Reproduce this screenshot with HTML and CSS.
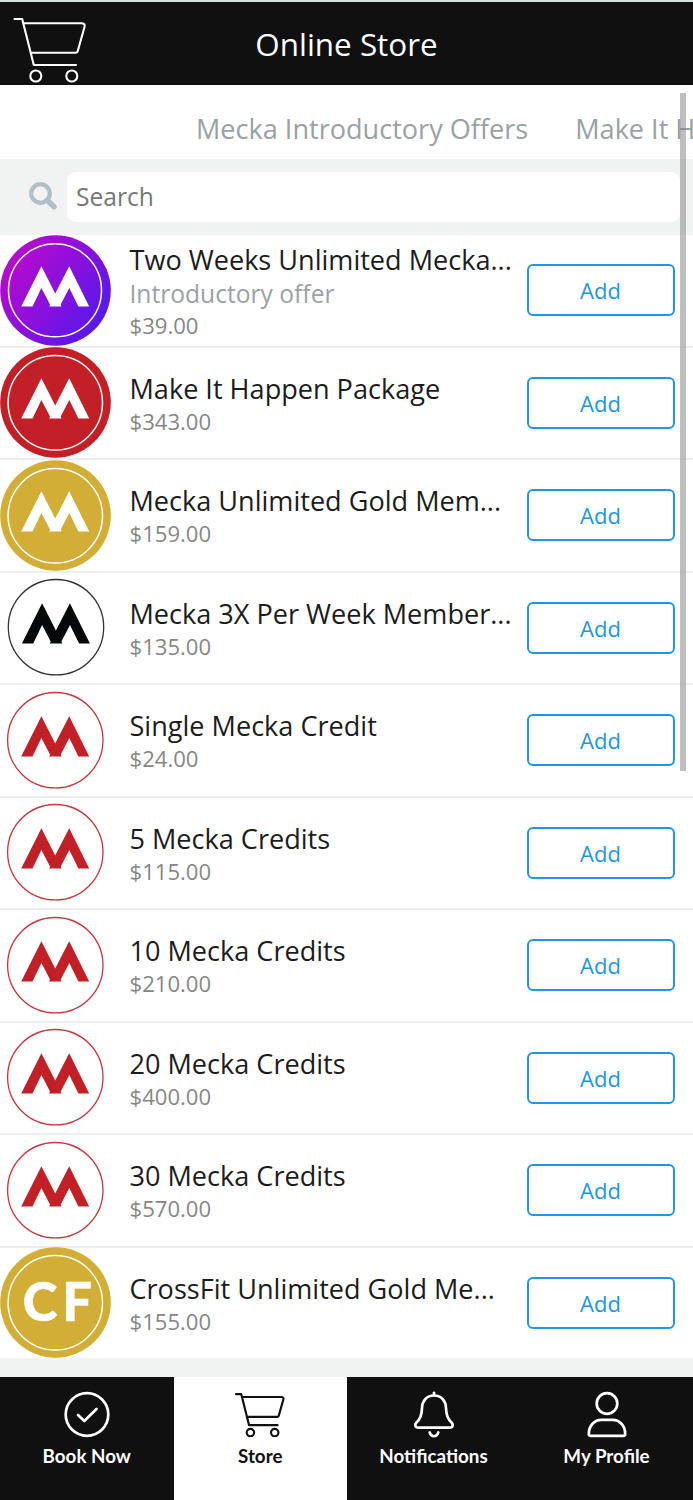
FILE: index.html
```html
<!DOCTYPE html>
<html lang="en">
<head>
<meta charset="utf-8">
<title>Online Store</title>
<link rel="stylesheet" href="styles.css">
</head>
<body>
<svg class="defs" width="0" height="0" aria-hidden="true">
  <defs>
    <linearGradient id="violet" x1="0.08" y1="0.2" x2="0.92" y2="0.8">
      <stop offset="0" stop-color="#b80ace"/><stop offset="0.5" stop-color="#8a10dc"/><stop offset="1" stop-color="#5518ee"/>
    </linearGradient>
    <path id="mark" d="M21.200 71.600L41.400 31.200L55.200 58.600L69.200 31.200L89.200 71.600H78.400L69.300 53L60.700 69.400L61.500 71.600H49.200L50 69.400L41.400 53L32.500 71.600Z"/>
    <symbol id="cart" viewBox="0 0 74 66">
      <g fill="none" stroke="currentColor" stroke-linecap="round" stroke-linejoin="round">
        <path d="M1.500 2H9.200L20.800 48H63M10.500 6.300H68.500Q72.500 6.300 71.500 10L64.700 34.300Q64.200 35.700 62.500 35.700H18"/>
        <circle cx="22.800" cy="59" r="5.500"/><circle cx="58.800" cy="59" r="5.500"/>
      </g>
    </symbol>
  </defs>
</svg>
<div class="app">
  <header class="header">
    <svg class="header-cart" viewBox="0 0 74 66"><use href="#cart"/></svg>
    <h1 class="header-title">Online Store</h1>
  </header>
  <nav class="tabs"><span class="tab tab-intro">Mecka Introductory Offers</span><span class="tab">Make It Happen</span></nav>
  <div class="search">
    <svg class="search-icon" viewBox="0 0 28 28"><circle cx="11.500" cy="11.500" r="9.300" fill="none" stroke="currentColor" stroke-width="4.200"/><path d="M18.500 18.500L25 24.800" stroke="currentColor" stroke-width="5.600" stroke-linecap="round"/></svg>
    <input class="search-input" type="text" placeholder="Search">
  </div>
  <main class="list">
    <article class="item"><svg class="logo violet" viewBox="0 0 111 111"><circle cx="55.500" cy="55.500" r="55.300"/><circle class="ring" cx="55" cy="55.300" r="46.500"/><use href="#mark"/></svg><div class="info"><h2 class="name">Two Weeks Unlimited Mecka...</h2><p class="note">Introductory offer</p><p class="price">$39.00</p></div><button class="add">Add</button></article>
    <article class="item"><svg class="logo red" viewBox="0 0 111 111"><circle cx="55.500" cy="55.500" r="55.300"/><circle class="ring" cx="55.300" cy="55.800" r="47.200"/><use href="#mark"/></svg><div class="info"><h2 class="name">Make It Happen Package</h2><p class="price">$343.00</p></div><button class="add">Add</button></article>
    <article class="item"><svg class="logo gold" viewBox="0 0 111 111"><circle cx="55.500" cy="55.500" r="55.300"/><circle class="ring" cx="55.300" cy="55.800" r="47.200"/><use href="#mark"/></svg><div class="info"><h2 class="name">Mecka Unlimited Gold Mem...</h2><p class="price">$159.00</p></div><button class="add">Add</button></article>
    <article class="item"><svg class="logo outline-black" viewBox="0 0 111 111"><circle cx="56" cy="55.200" r="47.700"/><use href="#mark" x="0.700" y="0"/></svg><div class="info"><h2 class="name">Mecka 3X Per Week Member...</h2><p class="price">$135.00</p></div><button class="add">Add</button></article>
    <article class="item"><svg class="logo outline-red" viewBox="0 0 111 111"><circle cx="55.300" cy="55.200" r="47.700"/><use href="#mark"/></svg><div class="info"><h2 class="name">Single Mecka Credit</h2><p class="price">$24.00</p></div><button class="add">Add</button></article>
    <article class="item"><svg class="logo outline-red" viewBox="0 0 111 111"><circle cx="55.300" cy="55.200" r="47.700"/><use href="#mark"/></svg><div class="info"><h2 class="name">5 Mecka Credits</h2><p class="price">$115.00</p></div><button class="add">Add</button></article>
    <article class="item"><svg class="logo outline-red" viewBox="0 0 111 111"><circle cx="55.300" cy="55.200" r="47.700"/><use href="#mark"/></svg><div class="info"><h2 class="name">10 Mecka Credits</h2><p class="price">$210.00</p></div><button class="add">Add</button></article>
    <article class="item"><svg class="logo outline-red" viewBox="0 0 111 111"><circle cx="55.300" cy="55.200" r="47.700"/><use href="#mark"/></svg><div class="info"><h2 class="name">20 Mecka Credits</h2><p class="price">$400.00</p></div><button class="add">Add</button></article>
    <article class="item"><svg class="logo outline-red" viewBox="0 0 111 111"><circle cx="55.300" cy="55.200" r="47.700"/><use href="#mark"/></svg><div class="info"><h2 class="name">30 Mecka Credits</h2><p class="price">$570.00</p></div><button class="add">Add</button></article>
    <article class="item"><svg class="logo gold" viewBox="0 0 111 111"><circle cx="55.500" cy="55.500" r="55.300"/><circle class="ring" cx="55.300" cy="55.800" r="47.200"/><text class="cf" x="22.800 62.300" y="73.800">CF</text></svg><div class="info"><h2 class="name">CrossFit Unlimited Gold Me...</h2><p class="price">$155.00</p></div><button class="add">Add</button></article>
  </main>
  <footer class="bar">
    <a class="bar-item"><svg class="bar-icon" viewBox="0 0 50 48"><circle cx="25" cy="23.500" r="21.300"/><path d="M16 24L22.300 30L34.500 18"/></svg><span>Book Now</span></a>
    <a class="bar-item active"><svg class="bar-icon bar-cart" viewBox="0 0 74 66"><use href="#cart"/></svg><span>Store</span></a>
    <a class="bar-item"><svg class="bar-icon" viewBox="0 0 50 48"><path d="M25 1.800V4.500M25 4.500C17.500 4.500 13.200 10 13 17C12.800 25 11 28.500 7.500 31.500C5.300 33.600 6.200 36.700 9.200 36.700H40.800C43.800 36.700 44.700 33.600 42.500 31.500C39 28.500 37.200 25 37 17C36.800 10 32.500 4.500 25 4.500ZM20.700 41.500C22 46.500 28 46.500 29.300 41.500"/></svg><span>Notifications</span></a>
    <a class="bar-item"><svg class="bar-icon" viewBox="0 0 50 48"><circle cx="25" cy="12.500" r="10.300"/><path d="M8.500 44.800Q6.800 44.800 6.800 43C6.800 34.500 12.500 28.800 19.500 28.800H30.500C37.500 28.800 43.200 34.500 43.200 43Q43.200 44.800 41.500 44.800Z"/></svg><span>My Profile</span></a>
  </footer>
  <div class="scrollbar"></div>
</div>
</body>
</html>
```
FILE: styles.css
```css
* { box-sizing: border-box; }
body { margin: 0; font-family: "Open Sans", "Noto Sans", sans-serif; background: #f1f3f3; }
h1, h2, p { margin: 0; font-weight: 400; }
.defs { position: absolute; }
.app { position: relative; width: 693px; height: 1500px; overflow: hidden; display: flex; flex-direction: column; border-top: 2px solid #d9dcdd; }
.header { flex: none; height: 83px; background: #101010; color: #fff; display: grid; grid-template-columns: 100px 1fr 100px; align-items: center; }
.header-cart { width: 74px; height: 66px; margin: 13px 0 0 13px; stroke-width: 2.1; }
.header-title { font-size: 31.4px; line-height: 44px; text-align: center; padding-top: 1px; }
.tabs { flex: none; height: 74px; background: #fff; display: flex; align-items: center; gap: 47px; padding: 13px 0 0 196px; overflow: hidden; color: #9aa1a5; font-size: 27.08px; line-height: 38px; white-space: nowrap; }
.tab { flex: none; }
.search { flex: none; height: 76px; display: flex; align-items: center; padding: 0 13px 0 29px; background: #f1f3f3; }
.search-icon { width: 28px; height: 28px; color: #b3bfc7; margin: 0 10px 3px 0; flex: none; }
.search-input { flex: 1; min-width: 0; height: 50px; border: 0; border-radius: 9px; background: #fff; padding: 0 9px 2px; font: 24.6px "Open Sans", sans-serif; }
.search-input::placeholder { color: #777; opacity: 1; }
.list { flex: none; height: 1123px; overflow: hidden; background: #fff; }
.item { height: 112.5px; border-bottom: 2px solid #eaeef0; display: flex; align-items: center; background: #fff; }
.logo { width: 111px; height: 111px; flex: none; }
.violet { fill: #fff; } .violet circle:first-child { fill: url(#violet); }
.red { fill: #fff; } .red circle:first-child { fill: #c22026; }
.gold { fill: #fff; } .gold circle:first-child { fill: #d2ae36; }
.logo .ring { fill: none; stroke: #fff; stroke-width: 1.5; }
.outline-black { fill: #050808; } .outline-black circle { fill: none; stroke: #303333; stroke-width: 1.3; }
.outline-red { fill: #c22026; } .outline-red circle { fill: none; stroke: #ca353b; stroke-width: 1.3; }
.cf { font: 900 52.5px Lato, sans-serif; stroke: #fff; stroke-width: 0.6px; }
.info { width: 388px; margin-left: 18.5px; flex: none; }
.name { font-size: 27.08px; line-height: 34px; padding-top: 2px; color: #1c1c1c; white-space: nowrap; }
.note { font-size: 24.6px; line-height: 33px; color: #9aa1a5; }
.price { font-size: 22.1px; line-height: 30px; color: #868686; }
.add { width: 148px; height: 52px; margin-left: 9px; border: 2px solid #2196e8; border-radius: 6px; background: #fff; color: #2196e8; font: 22px "Open Sans", sans-serif; padding: 0; }
.bar { height: 123px; margin-top: auto; background: #101010; display: grid; grid-template-columns: 173.5px 173.5px 1fr 1fr; flex: none; }
.bar-item { color: #fff; display: flex; flex-direction: column; align-items: center; padding-top: 14px; gap: 5px; font: 700 18.8px/24px Lato, sans-serif; }
.bar-item.active { color: #101010; background: #fff; }
.bar-icon { width: 50px; height: 48px; fill: none; stroke: currentColor; stroke-width: 2.7; stroke-linecap: round; stroke-linejoin: round; }
.bar-cart { stroke-width: 3.2; }
.scrollbar { position: absolute; left: 680px; top: 91px; width: 6px; height: 678px; background: rgba(128, 128, 128, 0.5); }
```
